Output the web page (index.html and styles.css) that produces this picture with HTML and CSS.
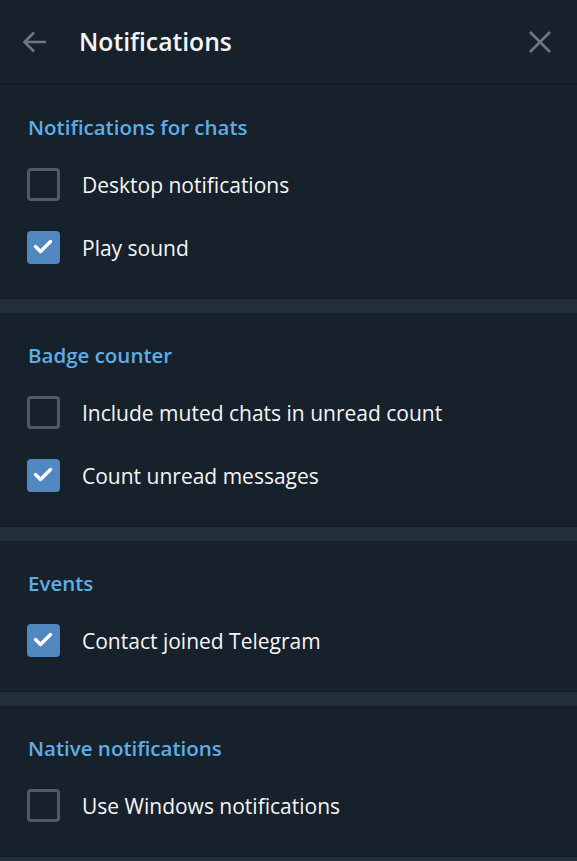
FILE: index.html
```html
<!DOCTYPE html>
<html lang="en">
<head>
    <meta charset="UTF-8">
    <meta name="viewport" content="width=device-width, initial-scale=1.0">
    <title>Notifications</title>
    <link rel="stylesheet" href="styles.css">
</head>
<body>
    <div class="panel">
        <div class="header">
            <button class="icon-btn back" type="button" aria-label="Back">
                <svg width="28" height="28" viewBox="0 0 28 28"><path d="M25 14H4M13 4.5L3.5 14L13 23.5" fill="none" stroke="currentColor" stroke-width="2.6"/></svg>
            </button>
            <h1 class="title">Notifications</h1>
            <button class="icon-btn close" type="button" aria-label="Close">
                <svg width="24" height="24" viewBox="0 0 24 24"><path d="M2 2L22 22M22 2L2 22" fill="none" stroke="currentColor" stroke-width="2.6"/></svg>
            </button>
        </div>

        <div class="section">
            <h2 class="section-title">Notifications for chats</h2>
            <label class="option"><input type="checkbox"><span class="box"></span>Desktop notifications</label>
            <label class="option"><input type="checkbox" checked><span class="box"></span>Play sound</label>
        </div>
        <div class="divider"></div>

        <div class="section">
            <h2 class="section-title">Badge counter</h2>
            <label class="option"><input type="checkbox"><span class="box"></span>Include muted chats in unread count</label>
            <label class="option"><input type="checkbox" checked><span class="box"></span>Count unread messages</label>
        </div>
        <div class="divider"></div>

        <div class="section">
            <h2 class="section-title">Events</h2>
            <label class="option"><input type="checkbox" checked><span class="box"></span>Contact joined Telegram</label>
        </div>
        <div class="divider"></div>

        <div class="section">
            <h2 class="section-title">Native notifications</h2>
            <label class="option"><input type="checkbox"><span class="box"></span>Use Windows notifications</label>
        </div>
        <div class="divider"></div>
    </div>
</body>
</html>
```

FILE: styles.css
```css
body {
    margin: 0;
    padding: 0;
    background-color: #17212b;
    font-family: "Open Sans", "Noto Sans", sans-serif;
    color: #f5f5f5;
}
.panel {
    width: 577px;
}
.header {
    display: flex;
    align-items: center;
    height: 84px;
    border-bottom: 1px solid #101820;
    padding: 0 25px 0 21px;
}
.icon-btn {
    background: none;
    border: none;
    padding: 0;
    color: #6b7782;
    display: flex;
    cursor: pointer;
}
.title {
    flex: 1;
    margin: 0 0 0 30px;
    font-size: 24.7px;
    font-weight: 600;
    color: #f5f5f5;
    line-height: 32px;
}
.section {
    padding: 28px 0 19px 27px;
}
.section-title {
    margin: 0 0 12px 1px;
    font-size: 20.5px;
    font-weight: 600;
    color: #5eaee6;
    line-height: 28px;
}
.option {
    display: flex;
    align-items: center;
    height: 63px;
    font-size: 21px;
    color: #f5f5f5;
    cursor: pointer;
}
.option input {
    display: none;
}
.box {
    box-sizing: border-box;
    width: 33px;
    height: 33px;
    border: 3px solid #4e5a67;
    border-radius: 4px;
    margin-right: 22px;
    flex-shrink: 0;
}
.option input:checked + .box {
    background-color: #5288c1;
    border-color: #5288c1;
    background-image: url("data:image/svg+xml,%3Csvg xmlns='http://www.w3.org/2000/svg' viewBox='0 0 33 33'%3E%3Cpath d='M8.5 15.5l5 5 10-10' fill='none' stroke='%23fff' stroke-width='3.4' stroke-linecap='round' stroke-linejoin='round'/%3E%3C/svg%3E");
    background-origin: border-box;
    background-size: 33px 33px;
}
.divider {
    height: 14px;
    background-color: #232e3c;
    border-top: 1px solid #121a22;
}
```
